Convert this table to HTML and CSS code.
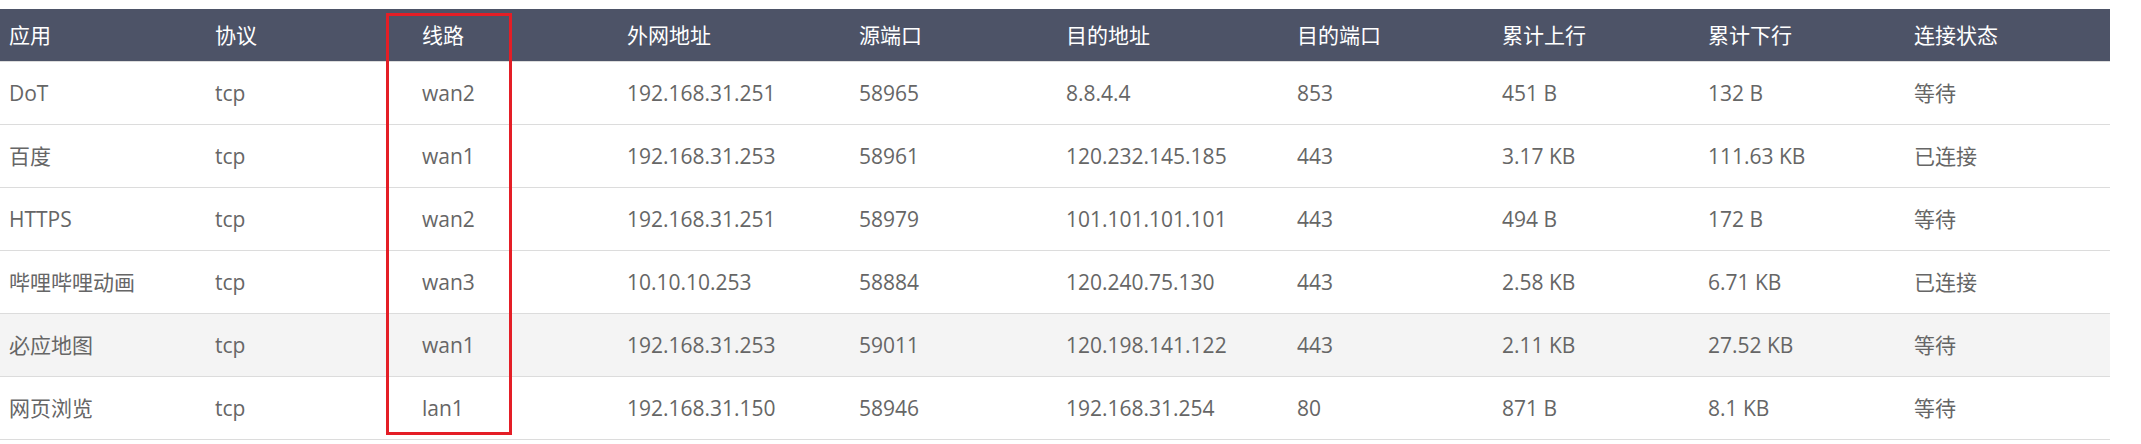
FILE: index.html
```html
<!DOCTYPE html>
<html lang="zh-CN">
<head>
<meta charset="utf-8">
<title>连接列表</title>
<link rel="stylesheet" href="styles.css">
</head>
<body>
<div class="wrap">
  <table class="conn">
    <colgroup>
      <col class="c1"><col class="c2"><col class="c3"><col class="c4"><col class="c5">
      <col class="c6"><col class="c7"><col class="c8"><col class="c9"><col class="c10">
    </colgroup>
    <thead>
      <tr>
        <th>应用</th><th>协议</th><th>线路</th><th>外网地址</th><th>源端口</th>
        <th>目的地址</th><th>目的端口</th><th>累计上行</th><th>累计下行</th><th>连接状态</th>
      </tr>
    </thead>
    <tbody>
      <tr>
        <td>DoT</td><td>tcp</td><td>wan2</td><td>192.168.31.251</td><td>58965</td>
        <td>8.8.4.4</td><td>853</td><td>451 B</td><td>132 B</td><td>等待</td>
      </tr>
      <tr>
        <td>百度</td><td>tcp</td><td>wan1</td><td>192.168.31.253</td><td>58961</td>
        <td>120.232.145.185</td><td>443</td><td>3.17 KB</td><td>111.63 KB</td><td>已连接</td>
      </tr>
      <tr>
        <td>HTTPS</td><td>tcp</td><td>wan2</td><td>192.168.31.251</td><td>58979</td>
        <td>101.101.101.101</td><td>443</td><td>494 B</td><td>172 B</td><td>等待</td>
      </tr>
      <tr>
        <td>哔哩哔哩动画</td><td>tcp</td><td>wan3</td><td>10.10.10.253</td><td>58884</td>
        <td>120.240.75.130</td><td>443</td><td>2.58 KB</td><td>6.71 KB</td><td>已连接</td>
      </tr>
      <tr class="hover">
        <td>必应地图</td><td>tcp</td><td>wan1</td><td>192.168.31.253</td><td>59011</td>
        <td>120.198.141.122</td><td>443</td><td>2.11 KB</td><td>27.52 KB</td><td>等待</td>
      </tr>
      <tr>
        <td>网页浏览</td><td>tcp</td><td>lan1</td><td>192.168.31.150</td><td>58946</td>
        <td>192.168.31.254</td><td>80</td><td>871 B</td><td>8.1 KB</td><td>等待</td>
      </tr>
    </tbody>
  </table>
  <div class="highlight"></div>
</div>
</body>
</html>
```

FILE: styles.css
```css
html, body {
  margin: 0;
  padding: 0;
  background: #ffffff;
}

.wrap {
  position: relative;
  padding-top: 9px;
  width: 2110px;
}

.conn {
  table-layout: fixed;
  width: 2110px;
  border-collapse: separate;
  border-spacing: 0;
  font-family: "Open Sans", "Noto Sans CJK SC", sans-serif;
  font-size: 21px;
}

.c1 { width: 206px; }
.c2 { width: 207px; }
.c3 { width: 205px; }
.c4 { width: 232px; }
.c5 { width: 207px; }
.c6 { width: 231px; }
.c7 { width: 205px; }
.c8 { width: 206px; }
.c9 { width: 206px; }
.c10 { width: 205px; }

.conn thead tr {
  height: 53px;
}

.conn th {
  background: #4d5367;
  color: #ffffff;
  font-weight: normal;
  text-align: left;
  padding: 0 0 0 9px;
  line-height: 1;
  vertical-align: middle;
  border-bottom: 1px solid #dcdcdc;
  white-space: nowrap;
}

.conn tbody tr {
  height: 63px;
}

.conn td {
  color: #666666;
  text-align: left;
  padding: 0 0 0 9px;
  line-height: 1;
  vertical-align: middle;
  border-bottom: 1px solid #dcdcdc;
  white-space: nowrap;
}

.conn tr.hover td {
  background: #f4f4f4;
}

.highlight {
  position: absolute;
  left: 386px;
  top: 13px;
  width: 126px;
  height: 422px;
  box-sizing: border-box;
  border: 3px solid #e41e26;
  pointer-events: none;
}
```
